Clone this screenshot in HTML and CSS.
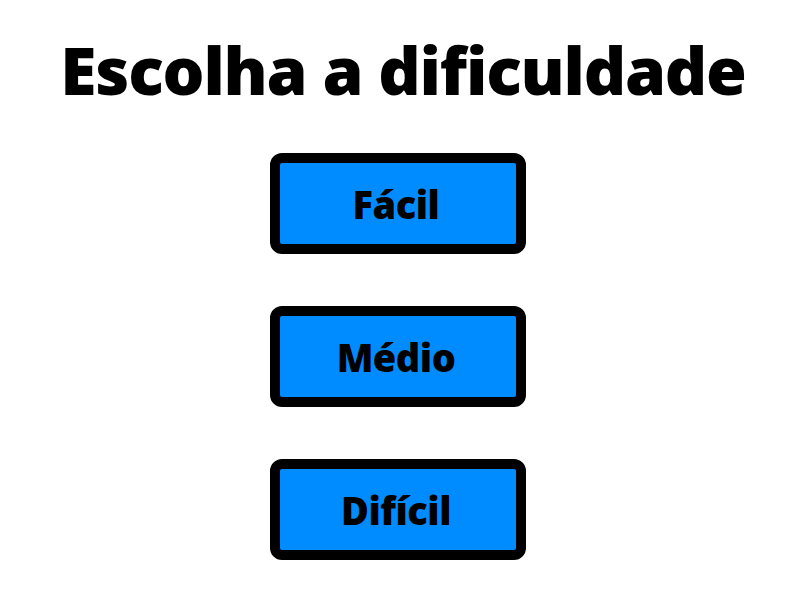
FILE: index.html
```html
<!DOCTYPE html>
<html lang="pt">
<head>
  <meta charset="UTF-8">
  <title>Dificuldade</title>
  <link rel="stylesheet" href="styles.css">
</head>
<body>
  <h1>Escolha a dificuldade</h1>
  <div class="levels">
    <button class="level">Fácil</button>
    <button class="level">Médio</button>
    <button class="level">Difícil</button>
  </div>
</body>
</html>
```

FILE: styles.css
```css
body {
  font-family: "Open Sans", sans-serif;
  margin: 0;
  background: #fff;
  color: #000;
  display: flex;
  flex-direction: column;
  align-items: center;
}

h1 {
  font-size: 66px;
  font-weight: 800;
  margin: 25px 0 0 6px;
  line-height: 88px;
  letter-spacing: -1.2px;
}

.levels {
  display: flex;
  flex-direction: column;
  gap: 52px;
  margin: 40px 4px 0 0;
}

.level {
  width: 256px;
  height: 101px;
  background-color: #008cff;
  border: 10px solid #000;
  border-radius: 12px;
  font-family: "Open Sans", sans-serif;
  font-size: 38px;
  font-weight: 800;
  letter-spacing: -0.5px;
  color: #000;
  padding: 0 4px 0 0;
  cursor: pointer;
}
```
